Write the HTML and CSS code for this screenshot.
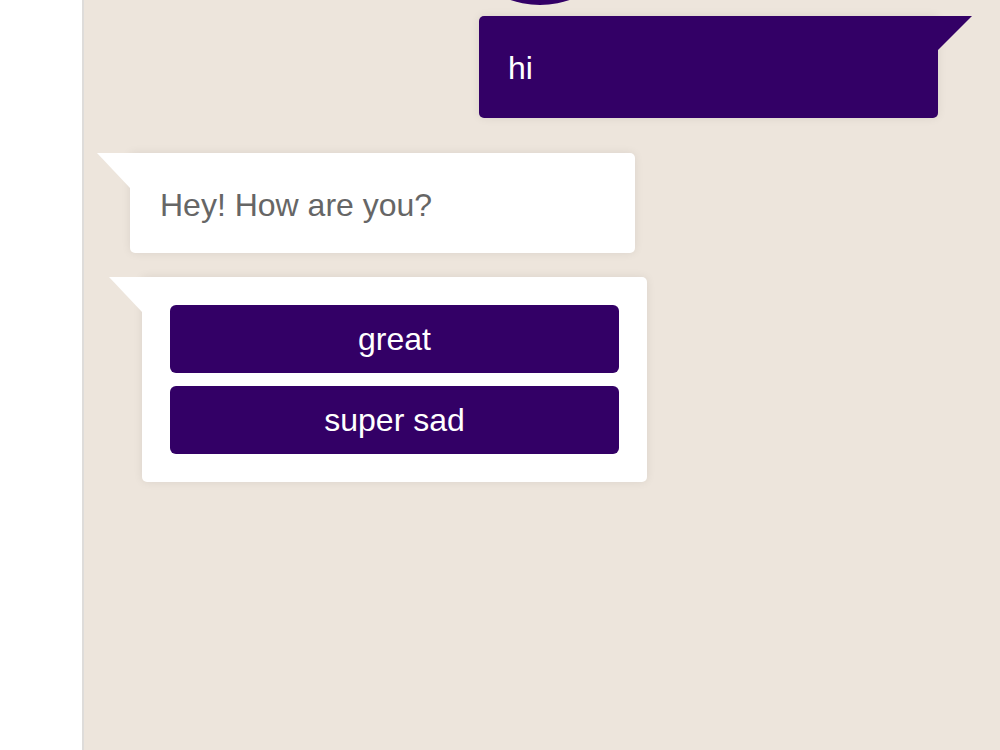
FILE: index.html
```html
<!DOCTYPE html>
<html lang="en">
<head>
    <meta charset="UTF-8">
    <meta name="viewport" content="width=device-width, initial-scale=1.0">
    <title>Chat</title>
    <link rel="stylesheet" href="styles.css">
</head>
<body>

<div class="sidebar"></div>

<div class="chat">
    <div class="avatar"></div>

    <div class="row user">
        <div class="bubble user-bubble">hi</div>
    </div>

    <div class="row bot">
        <div class="bubble bot-bubble">Hey! How are you?</div>
    </div>

    <div class="row bot choices">
        <div class="bubble bot-bubble buttons">
            <button class="choice">great</button>
            <button class="choice">super sad</button>
        </div>
    </div>
</div>

</body>
</html>
```

FILE: styles.css
```css
body {
    margin: 0;
    display: flex;
    height: 750px;
    overflow: hidden;
    font-family: "Liberation Sans", Arial, sans-serif;
}
.sidebar {
    width: 82px;
    background: #fff;
    border-right: 2px solid #dedcda;
}
.chat {
    flex: 1;
    background-color: #ede5dc;
    display: flex;
    flex-direction: column;
    overflow: hidden;
}
.avatar {
    width: 180px;
    height: 180px;
    border-radius: 50%;
    background: #330066;
    margin-top: -175px;
    margin-left: 366px;
    flex-shrink: 0;
}
.row {
    display: flex;
}
.user {
    justify-content: flex-end;
    margin-top: 11px;
    padding-right: 62px;
}
.bot {
    margin-top: 35px;
    padding-left: 46px;
}
.choices {
    margin-top: 24px;
    padding-left: 58px;
}
.bubble {
    position: relative;
    font-size: 32px;
    line-height: 40px;
    box-shadow: 0 0 10px rgba(0, 0, 0, 0.08);
}
.user-bubble {
    width: 459px;
    box-sizing: border-box;
    padding: 32px 29px 30px;
    background: #330066;
    color: #fff;
    border-radius: 5px 0 5px 5px;
}
.user-bubble::after {
    content: "";
    position: absolute;
    top: 0;
    right: -34px;
    border-top: 34px solid #330066;
    border-right: 34px solid transparent;
}
.bot-bubble {
    width: 505px;
    box-sizing: border-box;
    padding: 32px 30px 28px;
    background: #fff;
    color: #666;
    border-radius: 0 5px 5px 5px;
}
.bot-bubble::before {
    content: "";
    position: absolute;
    top: 0;
    left: -33px;
    border-top: 35px solid #fff;
    border-left: 33px solid transparent;
}
.buttons {
    padding: 28px;
    display: flex;
    flex-direction: column;
    gap: 13px;
}
.choice {
    height: 68px;
    border: none;
    border-radius: 6px;
    background-color: #330066;
    color: #fff;
    font-family: "Liberation Sans", Arial, sans-serif;
    font-size: 32px;
    cursor: pointer;
}
```
